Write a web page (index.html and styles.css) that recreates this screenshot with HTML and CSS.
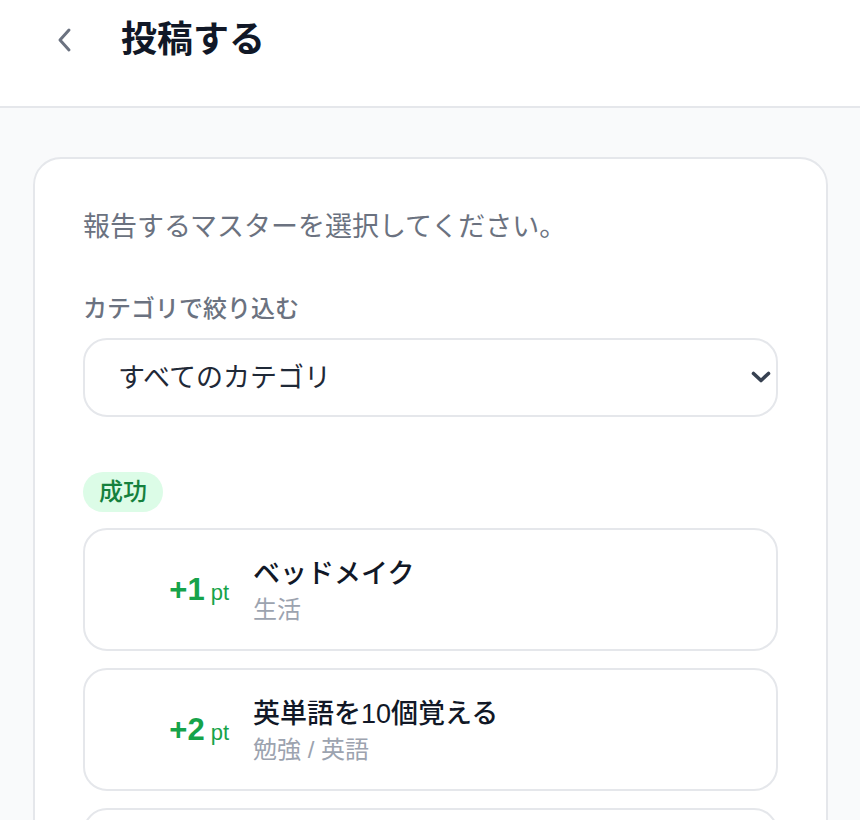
FILE: index.html
```html
<!DOCTYPE html>
<html lang="ja">
<head>
  <meta charset="UTF-8">
  <meta name="viewport" content="width=device-width, initial-scale=1.0">
  <title>投稿する</title>
  <link rel="stylesheet" href="styles.css">
</head>
<body>
  <header class="topbar">
    <button class="back-button" aria-label="戻る">
      <svg width="16" height="26" viewBox="0 0 16 26" fill="none">
        <path d="M13 3 L4 13 L13 23" stroke="#6b7280" stroke-width="3" stroke-linecap="round" stroke-linejoin="round"/>
      </svg>
    </button>
    <h1 class="page-title">投稿する</h1>
  </header>

  <main class="main">
    <div class="card">
      <p class="intro">報告するマスターを選択してください。</p>

      <div class="field">
        <label class="field-label" for="category">カテゴリで絞り込む</label>
        <div class="select-wrap">
          <select id="category" class="select">
            <option>すべてのカテゴリ</option>
            <option>生活</option>
            <option>勉強</option>
          </select>
          <svg class="select-arrow" width="20" height="12" viewBox="0 0 20 12" fill="none">
            <path d="M2.5 2.5 L10 9.5 L17.5 2.5" stroke="#374151" stroke-width="3.6" stroke-linecap="round" stroke-linejoin="round"/>
          </svg>
        </div>
      </div>

      <section class="group">
        <span class="badge">成功</span>
        <div class="item-list">
          <div class="item">
            <div class="points"><span class="points-value">+1</span><span class="points-unit">pt</span></div>
            <div class="item-body">
              <div class="item-title">ベッドメイク</div>
              <div class="item-sub">生活</div>
            </div>
          </div>
          <div class="item">
            <div class="points"><span class="points-value">+2</span><span class="points-unit">pt</span></div>
            <div class="item-body">
              <div class="item-title">英単語を10個覚える</div>
              <div class="item-sub">勉強 / 英語</div>
            </div>
          </div>
          <div class="item">
            <div class="points"><span class="points-value">+1</span><span class="points-unit">pt</span></div>
            <div class="item-body">
              <div class="item-title">ストレッチ</div>
              <div class="item-sub">運動</div>
            </div>
          </div>
        </div>
      </section>
    </div>
  </main>
</body>
</html>
```

FILE: styles.css
```css
body {
  margin: 0;
  padding: 0;
  font-family: "Liberation Sans", "Noto Sans CJK JP", sans-serif;
  background-color: #f9fafb;
  color: #111827;
}

.topbar {
  height: 108px;
  box-sizing: border-box;
  padding: 0 0 26px 50px;
  display: flex;
  align-items: center;
  background-color: #fff;
  border-bottom: 2px solid #e5e7eb;
}

.back-button {
  width: 28px;
  height: 40px;
  padding: 0;
  border: none;
  background: none;
  display: flex;
  align-items: center;
  justify-content: center;
  cursor: pointer;
}

.page-title {
  margin: 0 0 0 43px;
  font-size: 36px;
  line-height: 1;
  font-weight: 700;
  color: #111827;
}

.main {
  padding: 49px 32px 0 33px;
}

.card {
  background-color: #fff;
  border: 2px solid #e5e7eb;
  border-radius: 28px;
  padding: 48px;
}

.intro {
  margin: 0;
  font-size: 27px;
  line-height: 40px;
  color: #6b7280;
}

.field {
  margin-top: 44px;
}

.field-label {
  display: block;
  font-size: 24px;
  line-height: 36px;
  font-weight: 500;
  color: #6b7280;
  margin-bottom: 11px;
}

.select-wrap {
  position: relative;
}

.select {
  appearance: none;
  -webkit-appearance: none;
  width: 100%;
  height: 79px;
  box-sizing: border-box;
  padding: 0 60px 0 33px;
  border: 2px solid #e5e7eb;
  border-radius: 24px;
  background-color: #fff;
  font-family: inherit;
  font-size: 27px;
  color: #1f2937;
  outline: none;
}

.select-arrow {
  position: absolute;
  right: 7px;
  top: 33px;
  pointer-events: none;
}

.group {
  margin-top: 55px;
}

.badge {
  display: inline-block;
  height: 40px;
  line-height: 40px;
  padding: 0 16px;
  border-radius: 20px;
  background-color: #dcfce7;
  color: #15803d;
  font-size: 24px;
  font-weight: 500;
}

.item-list {
  margin-top: 16px;
  display: flex;
  flex-direction: column;
  gap: 17px;
}

.item {
  height: 123px;
  box-sizing: border-box;
  border: 2px solid #e5e7eb;
  border-radius: 24px;
  padding: 0 24px;
  display: flex;
  align-items: center;
  gap: 24px;
}

.points {
  width: 120px;
  text-align: right;
  color: #16a34a;
  white-space: nowrap;
}

.points-value {
  font-size: 31px;
  font-weight: 700;
}

.points-unit {
  font-size: 22px;
  margin-left: 6px;
}

.item-body {
  padding-top: 4px;
}

.item-title {
  font-size: 27px;
  line-height: 36px;
  font-weight: 500;
  color: #111827;
}

.item-sub {
  font-size: 24px;
  line-height: 36px;
  color: #9ca3af;
}
```
